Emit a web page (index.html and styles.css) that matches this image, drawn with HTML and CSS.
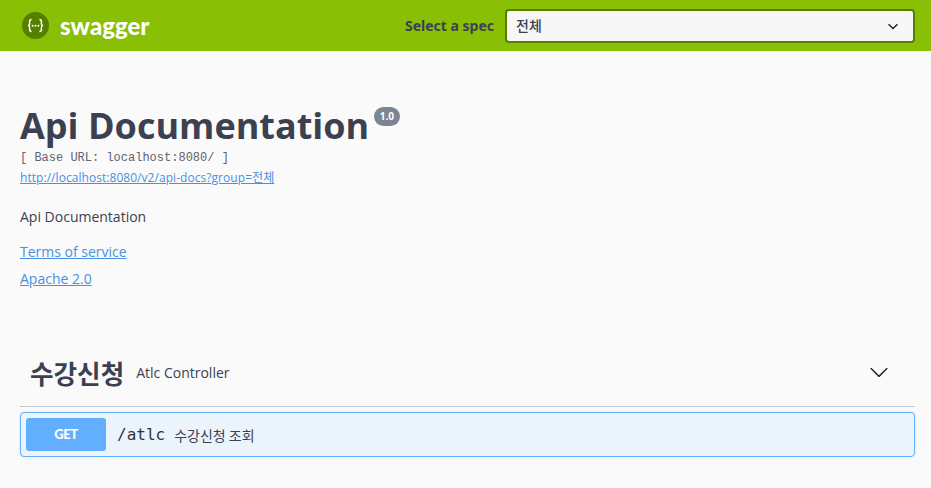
FILE: index.html
```html
<!DOCTYPE html>
<html>
<head>
    <title>Swagger UI</title>
    <link rel="stylesheet" href="styles.css">
</head>
<body>
    <div class="topbar">
        <a class="topbar-logo">
            <svg class="logo-icon" width="27" height="27" viewBox="0 0 27 27">
                <circle cx="13.5" cy="13.5" r="13.5" fill="#547f00"/>
                <path d="M9.6 7.6c-1.6 0-2 .8-2 2v2.2c0 1-.5 1.5-1.4 1.7 .9 .2 1.4 .7 1.4 1.7v2.2c0 1.2 .4 2 2 2M17.4 7.6c1.6 0 2 .8 2 2v2.2c0 1 .5 1.5 1.4 1.7-.9 .2-1.4 .7-1.4 1.7v2.2c0 1.2-.4 2-2 2" fill="none" stroke="#fff" stroke-width="1.5"/>
                <circle cx="10.6" cy="13.8" r="1" fill="#fff"/>
                <circle cx="13.5" cy="13.8" r="1" fill="#fff"/>
                <circle cx="16.4" cy="13.8" r="1" fill="#fff"/>
            </svg>
            <span class="logo-text">swagger</span>
        </a>
        <div class="spec-picker">
            <span class="spec-label">Select a spec</span>
            <div class="spec-select">
                <span class="spec-value">전체</span>
                <svg width="18" height="18" viewBox="0 0 20 20">
                    <path d="M5.6 7.5l4.4 4.2 4.4-4.2 1.1 1-5.5 5.3-5.5-5.3z" fill="#222"/>
                </svg>
            </div>
        </div>
    </div>

    <div class="wrapper">
        <div class="info">
            <div class="title-row">
                <h2 class="title">Api Documentation</h2>
                <span class="version">1.0</span>
            </div>
            <pre class="base-url">[ Base URL: localhost:8080/ ]</pre>
            <a class="docs-link" href="#">http://localhost:8080/v2/api-docs?group=전체</a>
            <p class="description">Api Documentation</p>
            <p class="info-link"><a href="#">Terms of service</a></p>
            <p class="info-link"><a href="#">Apache 2.0</a></p>
        </div>

        <div class="tag-header">
            <span class="tag-name">수강신청</span>
            <span class="tag-desc">Atlc Controller</span>
            <svg class="tag-arrow" width="20" height="20" viewBox="0 0 20 20">
                <path d="M17.418 6.109c.272-.268.709-.268.979 0s.271.701 0 .969l-7.908 7.83c-.27.268-.707.268-.979 0l-7.908-7.83c-.27-.268-.27-.701 0-.969.271-.268.709-.268.979 0L10 13.25l7.418-7.141z" fill="#222"/>
            </svg>
        </div>

        <div class="opblock">
            <span class="method">GET</span>
            <span class="path">/atlc</span>
            <span class="summary">수강신청 조회</span>
        </div>
    </div>
</body>
</html>
```

FILE: styles.css
```css
html, body {
    margin: 0;
    padding: 0;
    height: 100%;
    overflow: hidden;
}
body {
    background: #fafafa;
    font-family: "Open Sans", "Noto Sans CJK KR", sans-serif;
    color: #3b4151;
}
a {
    color: #4990e2;
}

/* topbar */
.topbar {
    background: #89bf04;
    height: 51px;
    box-sizing: border-box;
    padding: 0 16px 0 22px;
    display: flex;
    align-items: center;
    justify-content: space-between;
}
.topbar-logo {
    display: flex;
    align-items: center;
    gap: 11px;
    margin-bottom: 1px;
}
.logo-text {
    font-family: Lato, sans-serif;
    font-size: 24px;
    font-weight: 900;
    color: #fff;
}
.spec-picker {
    display: flex;
    align-items: center;
    gap: 11px;
}
.spec-label {
    font-family: "Noto Sans", sans-serif;
    font-size: 14px;
    font-weight: 700;
    color: #3b4151;
}
.spec-select {
    width: 410px;
    height: 34px;
    box-sizing: border-box;
    border: 2px solid #547f00;
    border-radius: 4px;
    background: #f7f7f7;
    display: flex;
    align-items: center;
    justify-content: space-between;
    padding: 0 11px 0 9px;
    font-family: "Noto Sans CJK KR", sans-serif;
    font-size: 14px;
    font-weight: 500;
    color: #3b4151;
}
.spec-value {
    margin-bottom: 2px;
}

/* info */
.wrapper {
    padding: 0 16px 0 20px;
}
.info {
    padding-top: 52px;
}
.title-row {
    display: flex;
    align-items: flex-start;
}
.title {
    margin: 0;
    font-size: 36px;
    font-weight: 700;
    line-height: 46px;
    color: #3b4151;
}
.version {
    margin: 4px 0 0 5px;
    padding: 0 5.5px;
    height: 19px;
    line-height: 19px;
    border-radius: 10px;
    background: #7d8492;
    color: #fff;
    font-size: 10px;
    font-weight: 700;
}
.base-url {
    margin: 1px 0 0;
    font-family: "Liberation Mono", monospace;
    font-size: 12px;
    line-height: 16px;
    color: #5f6470;
}
.docs-link {
    display: block;
    margin-top: 4px;
    font-size: 12px;
    line-height: 16px;
    letter-spacing: .05px;
}
.description {
    margin: 21px 0 0;
    font-size: 14px;
    line-height: 19px;
}
.info-link {
    margin: 16px 0 0;
    font-size: 14px;
    line-height: 19px;
}
.info-link + .info-link {
    margin-top: 8px;
}

/* tag */
.tag-header {
    margin-top: 54px;
    height: 65px;
    box-sizing: border-box;
    padding: 0 26px 4px 10px;
    border-bottom: 1px solid #c5c7cb;
    display: flex;
    align-items: center;
}
.tag-name {
    font-family: "Noto Sans CJK KR", sans-serif;
    font-size: 25.6px;
    font-weight: 700;
    color: #3b4151;
}
.tag-desc {
    margin-left: 12px;
    font-size: 14px;
    color: #3b4151;
}
.tag-arrow {
    margin-left: auto;
}

/* operation */
.opblock {
    margin-top: 5px;
    height: 45px;
    box-sizing: border-box;
    border: 1px solid #61affe;
    border-radius: 4px;
    background: #ebf3fb;
    display: flex;
    align-items: center;
    padding: 0 5px;
    box-shadow: 0 0 3px rgba(0,0,0,.1);
}
.method {
    width: 80px;
    height: 33px;
    line-height: 33px;
    text-align: center;
    background: #61affe;
    border-radius: 3px;
    color: #fff;
    font-family: Lato, sans-serif;
    font-size: 13px;
    font-weight: 900;
    letter-spacing: -.4px;
}
.path {
    margin-left: 11px;
    font-family: "DejaVu Sans Mono", monospace;
    font-size: 16px;
    color: #2f3441;
}
.summary {
    margin-left: 9px;
    font-family: "Noto Sans CJK KR", sans-serif;
    font-size: 14px;
    color: #3b4151;
}
```
